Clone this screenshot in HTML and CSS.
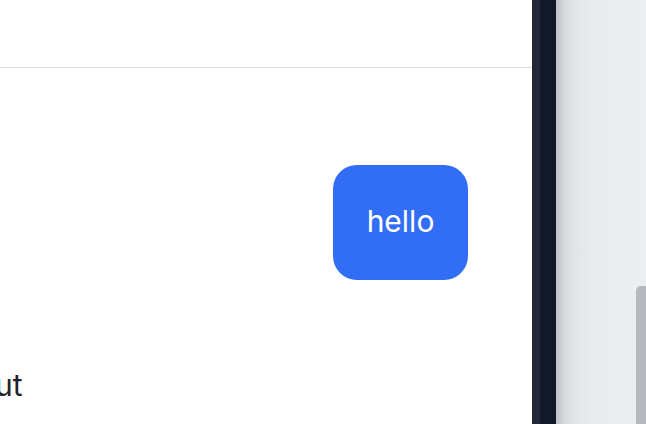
FILE: index.html
```html
<!DOCTYPE html>
<html>
<head>
<meta charset="utf-8">
<link rel="stylesheet" href="styles.css">
</head>
<body>
<div class="app">
  <main class="chat">
    <header class="chat-header"></header>
    <section class="messages">
      <div class="row row-user">
        <div class="bubble">hello</div>
      </div>
      <div class="row row-bot">
        <p class="bot-text">ut</p>
      </div>
    </section>
  </main>
  <div class="divider">
    <div class="divider-edge"></div>
    <div class="divider-core"></div>
  </div>
  <aside class="side">
    <div class="track">
      <div class="track-space"></div>
      <div class="thumb"></div>
    </div>
  </aside>
</div>
</body>
</html>
```
FILE: styles.css
```css
html, body {
  margin: 0;
  padding: 0;
  width: 646px;
  height: 424px;
  overflow: hidden;
  background: #ffffff;
  font-family: Inter, "Noto Sans", sans-serif;
}
.app {
  display: flex;
  width: 646px;
  height: 424px;
}
.chat {
  width: 532px;
  flex: none;
  display: flex;
  flex-direction: column;
  background: #ffffff;
  overflow: hidden;
}
.chat-header {
  height: 67px;
  flex: none;
  border-bottom: 1px solid #dedede;
}
.messages {
  display: flex;
  flex-direction: column;
  padding-top: 97px;
}
.row-user {
  display: flex;
  justify-content: flex-end;
  padding-right: 64px;
}
.bubble {
  width: 135px;
  box-sizing: border-box;
  text-align: center;
  background: #316ef5;
  color: #ffffff;
  font-size: 30px;
  line-height: 34px;
  padding: 39px 0 42px;
  border-radius: 24px;
}
.row-bot {
  padding-top: 88px;
}
.bot-text {
  margin: 0 0 0 -5px;
  font-size: 30px;
  line-height: 34px;
  color: #1f2328;
}
.divider {
  width: 24px;
  flex: none;
  display: flex;
}
.divider-edge {
  width: 8px;
  background: #232838;
}
.divider-core {
  flex: 1;
  background: #111827;
}
.side {
  flex: 1;
  background: linear-gradient(to right, #bfc1c6 0px, #d6d8dc 8px, #e4e5e9 20px, #eaebee 40px, #eceef1 100%);
  display: flex;
  justify-content: flex-end;
}
.track {
  width: 10px;
  display: flex;
  flex-direction: column;
}
.track-space {
  height: 286px;
  flex: none;
}
.thumb {
  flex: 1;
  background: #b5b8bd;
  border-top-left-radius: 5px;
}
```
